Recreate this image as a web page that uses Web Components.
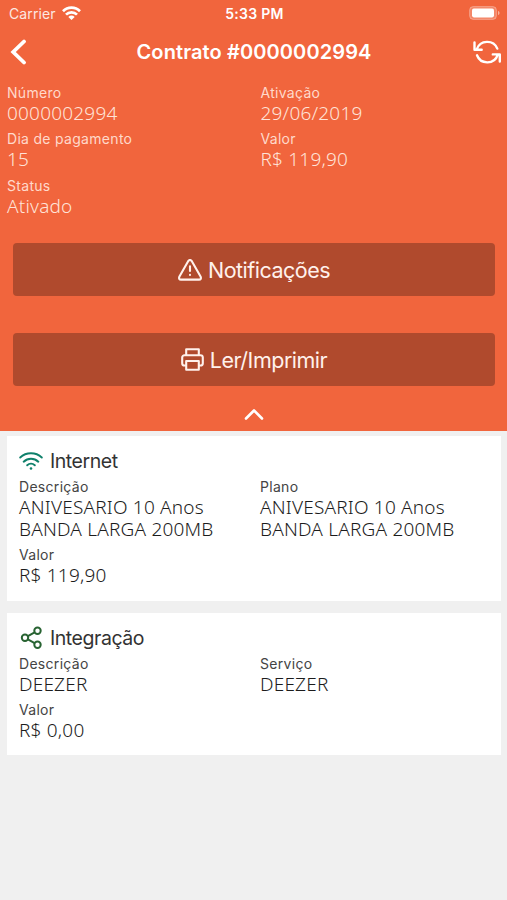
<!DOCTYPE html>
<html lang="pt-BR">
<head>
<meta charset="utf-8">
<title>Contrato</title>
<style>
  body {
    margin: 0;
    background: #f0f0f0;
    font-family: Inter, "Liberation Sans", sans-serif;
  }
</style>
</head>
<body>
<contract-page></contract-page>

<script>
const icons = {
  wifiSmall: '<svg width="19" height="14" viewBox="0 0 19 14" fill="none" stroke="currentColor" stroke-width="2.7"><path d="M1 5.200C5.700.4 13.300.4 18 5.200M4 8.600c3-3.100 8-3.100 11 0"/><path d="M6.300 10.900c1.900-1.800 4.500-1.800 6.400 0L9.500 14z" fill="currentColor" stroke="none"/></svg>',
  battery: '<svg width="31" height="14" viewBox="0 0 31 14"><rect x=".6" y=".6" width="26.800" height="12.800" rx="3.600" fill="#fff" fill-opacity=".22" stroke="#fff" stroke-opacity=".3"/><rect x="3" y="2.600" width="22" height="8.800" rx="1.800" fill="#fff"/><path d="M29 5c2 .5 2 3.500 0 4z" fill="#fff" fill-opacity=".5"/></svg>',
  back: '<svg width="18" height="26" viewBox="0 0 18 26" fill="none" stroke="currentColor" stroke-width="3.800" stroke-linecap="round"><path d="M15 2.500 4.200 13 15 23.500"/></svg>',
  refresh: '<svg width="30" height="26" viewBox="0 0 30 26" fill="none" stroke="currentColor" stroke-width="2.400" stroke-linecap="round" stroke-linejoin="round"><path d="M25.300 9.600A11 11 0 0 0 4.800 10.200M2.500 3.500v7.300h7.200M5 16.300a11 11 0 0 0 20.700-.5M20.800 15.400h7v7.100"/></svg>',
  alert: '<svg width="24" height="22" viewBox="0 0 24 22" fill="none" stroke="currentColor" stroke-width="2.100" stroke-linecap="round" stroke-linejoin="round"><path d="M10.300 2 1.300 17.800Q.4 20.500 3 20.600h18q2.600-.1 1.700-2.800L13.700 2Q12-.1 10.300 2z"/><path d="M12 7.300v4.700M12 15.900v.1"/></svg>',
  printer: '<svg width="23" height="23" viewBox="0 0 23 23" fill="none" stroke="currentColor" stroke-width="2.100" stroke-linejoin="round"><path d="M5.200 7.300V1.200h12.600v6.100M5.200 17.500H3.500a2.300 2.300 0 0 1-2.300-2.300V9.600a2.300 2.300 0 0 1 2.300-2.300h16a2.300 2.300 0 0 1 2.300 2.300v5.600a2.300 2.300 0 0 1-2.300 2.300h-1.700"/><rect x="5.200" y="13" width="12.600" height="8.800"/></svg>',
  up: '<svg width="20" height="13" viewBox="0 0 20 13" fill="none" stroke="currentColor" stroke-width="2.600" stroke-linecap="round" stroke-linejoin="round"><path d="M2 10.500 10 2.500l8 8"/></svg>',
  wifi: '<svg width="24" height="18" viewBox="0 0 24 18" fill="none" stroke="#0f806b" stroke-width="1.900" stroke-linecap="round"><path d="M1.200 5.500C7.200-.1 16.800-.1 22.800 5.500M4.700 9.700c4.100-3.900 10.500-3.900 14.600 0M8.200 13.300c2.200-2 5.400-2 7.600 0"/><circle cx="12" cy="16.500" r="1.300" fill="#0f806b" stroke="none"/></svg>',
  share: '<svg width="24" height="24" viewBox="0 0 24 24" fill="none" stroke="#286332" stroke-width="2"><circle cx="18.500" cy="4.700" r="3.200"/><circle cx="6" cy="11.700" r="3.200"/><circle cx="18.500" cy="18.700" r="3.200"/><path d="m8.900 10.100 6.700-3.800M8.900 13.300l6.700 3.800"/></svg>'
};

function define(name, html) {
  const template = document.createElement('template');
  template.innerHTML = html;
  window.customElements.define(name, class extends HTMLElement {
    constructor() {
      super();
      this.attachShadow({ mode: 'open' });
      this.shadowRoot.appendChild(template.content.cloneNode(true));
    }
  });
}

class AppIcon extends HTMLElement {
  constructor() {
    super();
    this.attachShadow({ mode: 'open' });
  }

  connectedCallback() {
    this.shadowRoot.innerHTML = `
      <style>
        :host { display: inline-flex; flex: none; }
        svg { display: block; }
      </style>
      ${icons[this.getAttribute('name')]}
    `;
  }
}
window.customElements.define('app-icon', AppIcon);

define('status-bar', `
  <style>
    :host {
      display: grid;
      grid-template-columns: 1fr auto 1fr;
      align-items: center;
      height: 26px;
      padding: 0 7px 0 9px;
      font-size: 14px;
    }
    .carrier {
      display: flex;
      align-items: center;
      gap: 6px;
      letter-spacing: 0.1px;
    }
    .carrier span { opacity: 0.85; }
    .time { font-weight: 600; font-size: 14px; letter-spacing: 0.3px; }
    .battery { justify-self: end; }
  </style>
  <div class="carrier"><span>Carrier</span><app-icon name="wifiSmall"></app-icon></div>
  <div class="time">5:33 PM</div>
  <app-icon class="battery" name="battery"></app-icon>
`);

define('nav-bar', `
  <style>
    :host {
      display: grid;
      grid-template-columns: 40px 1fr 40px;
      align-items: center;
      height: 52px;
      padding: 0 5px 0 9px;
    }
    .title {
      padding-right: 3px;
      text-align: center;
      font-size: 20px;
      font-weight: 600;
      letter-spacing: 0.1px;
    }
    .end { justify-self: end; }
  </style>
  <app-icon name="back"></app-icon>
  <div class="title"><slot></slot></div>
  <app-icon class="end" name="refresh"></app-icon>
`);

define('info-grid', `
  <style>
    :host {
      display: grid;
      grid-template-columns: 1fr 1fr;
      gap: 6.4px 7px;
    }
  </style>
  <slot></slot>
`);

class InfoField extends HTMLElement {
  constructor() {
    super();
    this.attachShadow({ mode: 'open' });
  }

  connectedCallback() {
    this.shadowRoot.innerHTML = `
      <style>
        :host { display: block; }
        .label {
          font-size: 14px;
          line-height: 18px;
          letter-spacing: 0.3px;
          color: var(--label-color, #444);
        }
        .value {
          font-family: "Noto Sans", "Open Sans", sans-serif;
          font-weight: 340;
          font-size: 19px;
          line-height: 22px;
          letter-spacing: 0.2px;
          color: var(--value-color, #1c1c1c);
        }
      </style>
      <div class="label">${this.getAttribute('label')}</div>
      <div class="value"><slot></slot></div>
    `;
  }
}
window.customElements.define('info-field', InfoField);

define('action-button', `
  <style>
    :host { display: block; }
    button {
      display: flex;
      align-items: center;
      justify-content: center;
      gap: 6px;
      width: 100%;
      height: 53.5px;
      padding: 0;
      border: 0;
      border-radius: 4px;
      background: #b04a2d;
      color: #fff1ec;
      font: 400 21.5px Inter, sans-serif;
      letter-spacing: -0.5px;
    }
  </style>
  <button><slot name="icon"></slot><span><slot></slot></span></button>
`);

define('service-card', `
  <style>
    :host {
      display: block;
      box-sizing: border-box;
      padding: 12px 7px 14px 12px;
      background: #fff;
    }
    .head {
      display: flex;
      align-items: center;
      gap: 7px;
      height: 26px;
      margin-bottom: 4px;
      font-size: 19.5px;
      letter-spacing: -0.45px;
      color: #333;
    }
  </style>
  <div class="head"><slot name="icon"></slot><slot name="title"></slot></div>
  <info-grid><slot></slot></info-grid>
`);

define('contract-page', `
  <style>
    :host { display: block; min-height: 900px; }
    header {
      display: flex;
      flex-direction: column;
      box-sizing: border-box;
      height: 430.5px;
      background: #f1653d;
      color: #fff;
      --label-color: #ffd9cb;
      --value-color: #ffe3d8;
    }
    .info { padding: 6px 0 0 7px; }
    .actions {
      display: flex;
      flex-direction: column;
      gap: 36.5px;
      padding: 26.2px 12px 0 13px;
    }
    .toggle { align-self: center; margin-top: 21.5px; }
    main {
      display: flex;
      flex-direction: column;
      gap: 12px;
      padding: 5.5px 6px 0 7px;
    }
    .internet { height: 165px; }
    .integration { height: 142px; }
  </style>
  <header>
    <status-bar></status-bar>
    <nav-bar>Contrato #0000002994</nav-bar>
    <info-grid class="info">
      <info-field label="Número">0000002994</info-field>
      <info-field label="Ativação">29/06/2019</info-field>
      <info-field label="Dia de pagamento">15</info-field>
      <info-field label="Valor">R$ 119,90</info-field>
      <info-field label="Status">Ativado</info-field>
    </info-grid>
    <div class="actions">
      <action-button><app-icon slot="icon" name="alert"></app-icon>Notificações</action-button>
      <action-button><app-icon slot="icon" name="printer"></app-icon>Ler/Imprimir</action-button>
    </div>
    <app-icon class="toggle" name="up"></app-icon>
  </header>
  <main>
    <service-card class="internet">
      <app-icon slot="icon" name="wifi"></app-icon>
      <span slot="title">Internet</span>
      <info-field label="Descrição">ANIVESARIO 10 Anos BANDA LARGA 200MB</info-field>
      <info-field label="Plano">ANIVESARIO 10 Anos BANDA LARGA 200MB</info-field>
      <info-field label="Valor">R$ 119,90</info-field>
    </service-card>
    <service-card class="integration">
      <app-icon slot="icon" name="share"></app-icon>
      <span slot="title">Integração</span>
      <info-field label="Descrição">DEEZER</info-field>
      <info-field label="Serviço">DEEZER</info-field>
      <info-field label="Valor">R$ 0,00</info-field>
    </service-card>
  </main>
`);
</script>
</body>
</html>
